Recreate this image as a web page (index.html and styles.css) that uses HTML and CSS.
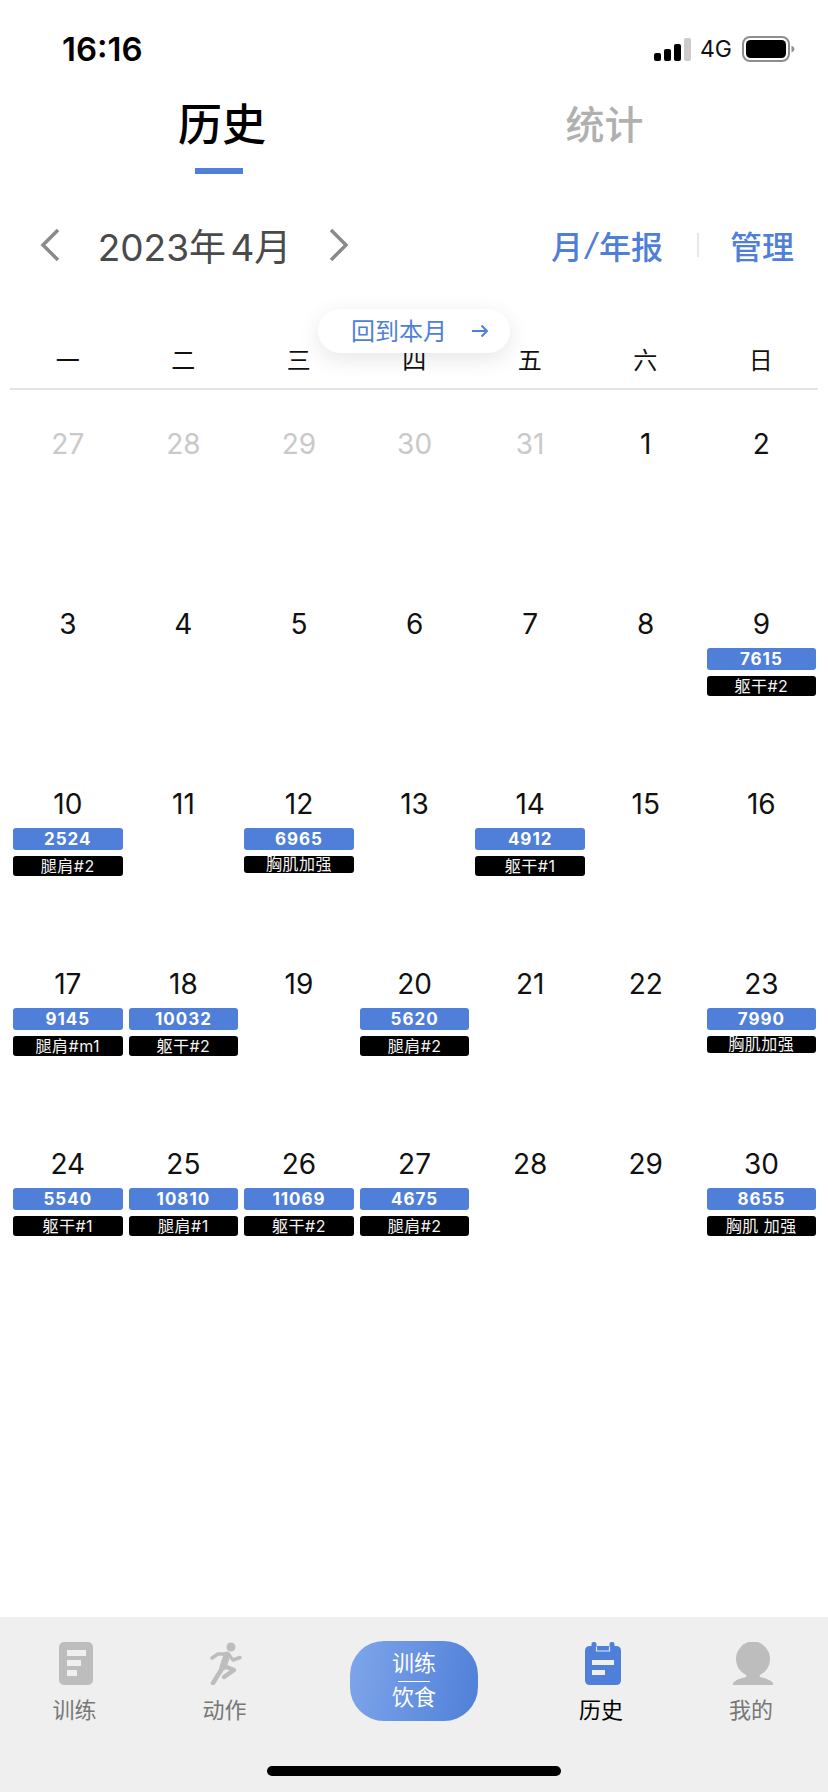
FILE: index.html
```html
<!DOCTYPE html>
<html lang="zh">
<head>
  <meta charset="UTF-8">
  <title>历史</title>
  <link rel="stylesheet" href="styles.css">
</head>
<body>
  <div class="phone">
    <div class="status-bar">
      <span class="time">16:16</span>
      <div class="status-icons">
        <svg class="signal" width="37" height="23" viewBox="0 0 37 23">
          <rect x="0" y="15" width="7" height="8" rx="2" fill="#000"/>
          <rect x="10" y="11" width="7" height="12" rx="2" fill="#000"/>
          <rect x="20" y="6" width="7" height="17" rx="2" fill="#000"/>
          <rect x="30" y="0" width="7" height="23" rx="2" fill="#ccc"/>
        </svg>
        <span class="net">4G</span>
        <svg class="battery" width="53" height="26" viewBox="0 0 53 26">
          <rect x="1" y="1" width="46" height="24" rx="7" fill="none" stroke="#8e8e8e" stroke-width="2"/>
          <rect x="4" y="4" width="40" height="18" rx="4.5" fill="#000"/>
          <path d="M49.500 9.500 q3 1.500 3 3.500 t-3 3.500z" fill="#8e8e8e"/>
        </svg>
      </div>
    </div>

    <div class="tabs">
      <div class="tab tab-active">历史<span class="tab-line"></span></div>
      <div class="tab">统计</div>
    </div>

    <div class="toolbar">
      <div class="month-nav">
        <svg width="22" height="34" viewBox="0 0 22 34"><path d="M19 2 L4 17 L19 32" fill="none" stroke="#8a8a8a" stroke-width="3.5"/></svg>
        <span class="month-label">2023年 4月</span>
        <svg width="22" height="34" viewBox="0 0 22 34"><path d="M3 2 L18 17 L3 32" fill="none" stroke="#8a8a8a" stroke-width="3.5"/></svg>
      </div>
      <div class="actions">
        <span>月<i class="slash">/</i>年报</span>
        <span class="divider"></span>
        <span>管理</span>
      </div>
    </div>

    <div class="calendar">
      <div class="back-pill">
        <span class="back-text">回到本月</span>
        <svg width="18" height="14" viewBox="0 0 18 14"><path d="M1 7 H16 M10.500 1.500 L16 7 L10.500 12.500" fill="none" stroke="#4f7fd8" stroke-width="2"/></svg>
      </div>
      <div class="weekdays">
        <span>一</span><span>二</span><span>三</span><span>四</span><span>五</span><span>六</span><span>日</span>
      </div>
      <div class="grid" id="grid"></div>
    </div>

    <nav class="tabbar">
      <div class="tabbar-items">
        <div class="nav-item">
          <svg width="34" height="43" viewBox="0 0 34 43">
            <rect width="34" height="43" rx="5" fill="#bdbdbd"/>
            <rect x="8" y="8" width="19" height="6" fill="#efefef"/>
            <rect x="8" y="18" width="14" height="6" fill="#efefef"/>
            <rect x="8" y="28" width="10" height="6" fill="#efefef"/>
          </svg>
          <span>训练</span>
        </div>
        <div class="nav-item">
          <svg width="32" height="43" viewBox="0 0 32 43">
            <circle cx="21" cy="5" r="4.500" fill="#bdbdbd"/>
            <g fill="none" stroke="#bdbdbd" stroke-linecap="round" stroke-linejoin="round">
              <path d="M17 13 L13 25" stroke-width="7"/>
              <path d="M17 12 L8 12 L2 16" stroke-width="3.500"/>
              <path d="M19 13 L23 18 L30 15.500" stroke-width="3.500"/>
              <path d="M13 25 L3 41" stroke-width="4.500"/>
              <path d="M14 24 L24 28 L14 35" stroke-width="4.500"/>
            </g>
          </svg>
          <span>动作</span>
        </div>
        <div class="center-btn">
          <span>训练</span>
          <i class="center-line"></i>
          <span>饮食</span>
        </div>
        <div class="nav-item nav-active">
          <svg width="36" height="43" viewBox="0 0 36 43">
            <path d="M5 4 H31 Q36 4 36 9 V38 Q36 43 31 43 H5 Q0 43 0 38 V9 Q0 4 5 4z" fill="#4f7fd8"/>
            <rect x="6.500" y="0" width="5" height="11" rx="2" fill="#4f7fd8"/>
            <rect x="24.500" y="0" width="5" height="11" rx="2" fill="#4f7fd8"/>
            <path d="M11.500 4.500 V9 H24.500 V4.500" stroke="#dfe7f7" stroke-width="1.200" fill="none"/>
            <rect x="7" y="18" width="22" height="5" fill="#efefef"/>
            <rect x="7" y="28" width="13" height="5" fill="#efefef"/>
          </svg>
          <span>历史</span>
        </div>
        <div class="nav-item">
          <svg width="40" height="43" viewBox="0 0 40 43">
            <ellipse cx="20" cy="17" rx="17" ry="17.500" fill="#bdbdbd"/>
            <path d="M14 30 H26 L27 35 Q37 37 40 41 L40 43 H0 L0 41 Q3 37 13 35z" fill="#bdbdbd"/>
          </svg>
          <span>我的</span>
        </div>
      </div>
      <div class="home-bar"></div>
    </nav>
  </div>

  <script src="calendar.js"></script>
</body>
</html>
```

FILE: calendar.js
```js
// April 2023 grid: [day, volume, name]
const days = [
  [27], [28], [29], [30], [31], [1], [2],
  [3], [4], [5], [6], [7], [8], [9, '7615', '躯干#2'],
  [10, '2524', '腿肩#2'], [11], [12, '6965', '胸肌加强'], [13], [14, '4912', '躯干#1'], [15], [16],
  [17, '9145', '腿肩#m1'], [18, '10032', '躯干#2'], [19], [20, '5620', '腿肩#2'], [21], [22], [23, '7990', '胸肌加强'],
  [24, '5540', '躯干#1'], [25, '10810', '腿肩#1'], [26, '11069', '躯干#2'], [27, '4675', '腿肩#2'], [28], [29], [30, '8655', '胸肌 加强']
];

const grid = document.getElementById('grid');
days.forEach((d, i) => {
  const cell = document.createElement('div');
  cell.className = 'day';
  if (i < 5) cell.classList.add('day-muted');
  let html = `<div class="day-num">${d[0]}</div>`;
  if (d[1]) {
    // the four character names sit in a slightly shorter tag
    const short = d[2] === '胸肌加强' ? ' tag-short' : '';
    html += `<div class="vol">${d[1]}</div><div class="tag${short}">${d[2]}</div>`;
  }
  cell.innerHTML = html;
  grid.appendChild(cell);
});
```

FILE: styles.css
```css
* {
  box-sizing: border-box;
}
body {
  margin: 0;
  background: #fff;
  font-family: "Liberation Sans", "Noto Sans CJK SC", sans-serif;
}
.phone {
  width: 828px;
  height: 1792px;
  display: flex;
  flex-direction: column;
  overflow: hidden;
}

/* Status bar */
.status-bar {
  height: 90px;
  padding: 29px 33px 0 62px;
  display: flex;
  justify-content: space-between;
  align-items: flex-start;
}
.time {
  font-family: Inter, sans-serif;
  font-size: 33px;
  font-weight: 600;
  line-height: 40px;
  color: #000;
}
.status-icons {
  display: flex;
  align-items: center;
  height: 40px;
}
.net {
  font-family: Inter, sans-serif;
  font-size: 23px;
  margin: 0 10px 0 9px;
  color: #111;
}

/* Top tabs */
.tabs {
  height: 84px;
  display: flex;
  font-size: 44px;
  color: #b0b0b0;
  font-weight: 500;
}
.tab {
  display: flex;
  flex-direction: column;
  align-items: center;
  padding-top: 6px;
  line-height: 60px;
}
.tab:first-child {
  width: 444px;
}
.tab:last-child {
  width: 321px;
  font-size: 39px;
}
.tab-active {
  color: #000;
}
.tab-line {
  width: 48px;
  height: 6px;
  margin: 12px 6px 0 0;
  background: #4f7fd8;
}

/* Month toolbar */
.toolbar {
  height: 74px;
  margin-top: 34px;
  margin-bottom: 1px;
  padding: 0 34px 0 39px;
  display: flex;
  justify-content: space-between;
  align-items: center;
}
.month-nav {
  display: flex;
  align-items: center;
}
.month-label {
  width: 267px;
  text-align: center;
  font-family: Inter, "Noto Sans CJK SC", sans-serif;
  font-size: 37px;
  color: #4a4a4a;
  word-spacing: -6px;
}
.actions {
  display: flex;
  align-items: center;
  font-size: 32px;
  font-weight: 500;
  color: #4f7fd8;
}
.slash {
  font-size: 36px;
  font-weight: 400;
  margin: 0 3px;
}
.divider {
  width: 2px;
  height: 24px;
  margin: 0 31px 0 34px;
  background: #e8e8e8;
}

/* Calendar */
.calendar {
  position: relative;
  flex: 1;
  padding: 0 10px;
}
.back-pill {
  position: absolute;
  top: 26px;
  left: 318px;
  width: 192px;
  height: 44px;
  padding-left: 33px;
  border-radius: 22px;
  background: #fff;
  box-shadow: 0 6px 22px rgba(0, 0, 0, 0.1);
  display: flex;
  align-items: center;
  gap: 24px;
  font-size: 24px;
  color: #4f7fd8;
}
.back-text {
  margin-bottom: 4px;
}
.weekdays {
  height: 107px;
  padding-top: 60px;
  display: grid;
  grid-template-columns: repeat(7, 115.5px);
  text-align: center;
  font-size: 24px;
  line-height: 35px;
  color: #111;
  border-bottom: 2px solid #e4e4e4;
}
.grid {
  display: grid;
  grid-template-columns: repeat(7, 115.6px);
  grid-auto-rows: 180px;
  padding-top: 37px;
}
.day {
  padding: 0 3px;
  text-align: center;
}
.day-num {
  font-family: Inter, sans-serif;
  font-size: 28px;
  line-height: 34px;
  margin-bottom: 7px;
  color: #111;
}
.day-muted .day-num {
  color: #c9c9c9;
}
.vol {
  height: 22px;
  border-radius: 3px;
  background: #4f7fd8;
  color: #fff;
  font-family: Inter, sans-serif;
  font-size: 17px;
  font-weight: 700;
  letter-spacing: 1px;
  line-height: 22px;
}
.tag {
  height: 20px;
  margin-top: 6px;
  border-radius: 3px;
  background: #000;
  color: #f4f4f4;
  font-family: Inter, "Noto Sans CJK SC", sans-serif;
  font-size: 16px;
  letter-spacing: 0.5px;
  line-height: 20px;
  white-space: nowrap;
}
.tag-short {
  height: 17px;
  line-height: 17px;
}

/* Bottom tab bar */
.tabbar {
  height: 175px;
  background: #efefef;
  position: relative;
}
.tabbar-items {
  display: grid;
  grid-template-columns: 149px 151px 228px 146px 154px;
  padding: 25px 0 0 0;
}
.nav-item {
  display: flex;
  flex-direction: column;
  align-items: center;
  gap: 12px;
  font-size: 22px;
  line-height: 28px;
  color: #777;
}
.nav-item svg {
  margin-left: 3px;
}
.nav-active {
  color: #000;
}
.center-btn {
  justify-self: center;
  width: 128px;
  height: 80px;
  margin-top: -1px;
  border-radius: 34px;
  background: linear-gradient(100deg, #7fa6ea, #4f7fd8);
  color: #fff;
  font-size: 22px;
  line-height: 28px;
  display: flex;
  flex-direction: column;
  align-items: center;
  justify-content: center;
}
.center-line {
  width: 32px;
  height: 1px;
  margin: 3px 0 2px;
  background: #fff;
}
.home-bar {
  position: absolute;
  left: 267px;
  top: 149px;
  width: 294px;
  height: 10px;
  border-radius: 6px;
  background: #000;
}
```
